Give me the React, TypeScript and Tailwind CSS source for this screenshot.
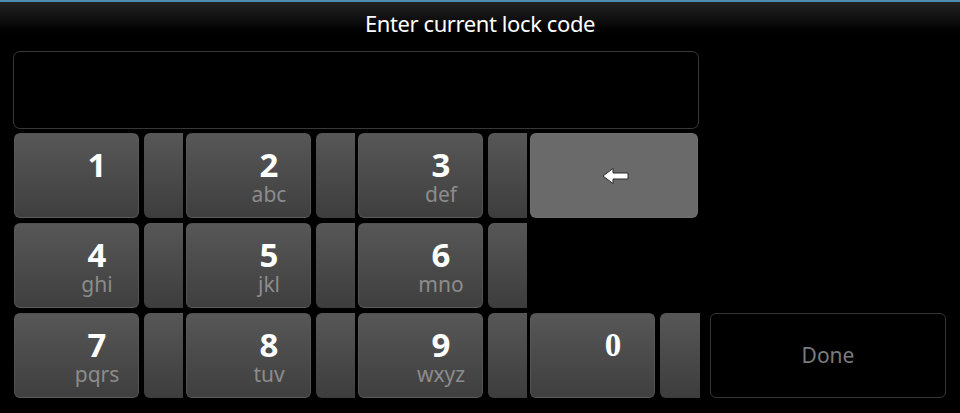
const keys = [
  [
    { d: "1", l: "" },
    { d: "2", l: "abc" },
    { d: "3", l: "def" },
  ],
  [
    { d: "4", l: "ghi" },
    { d: "5", l: "jkl" },
    { d: "6", l: "mno" },
  ],
  [
    { d: "7", l: "pqrs" },
    { d: "8", l: "tuv" },
    { d: "9", l: "wxyz" },
  ],
];

function Strip({ w = 39 }: { w?: number }) {
  return (
    <div
      className="h-[85px] rounded-l-[6px] bg-gradient-to-b from-[#575757] to-[#3d3d3d] shrink-0"
      style={{ width: w }}
    />
  );
}

function Key({ d, l, serif }: { d: string; l: string; serif?: boolean }) {
  return (
    <div className="w-[125px] h-[85px] rounded-[6px] bg-gradient-to-b from-[#575757] to-[#3f3f3f] border border-[#5e5e5e]/60 shrink-0 flex">
      <div className="ml-[52px] w-[60px] flex flex-col items-center pt-[16px]">
        <span
          className="text-white font-bold text-[33px] leading-[30px]"
          style={serif ? { fontFamily: '"Liberation Serif", serif' } : undefined}
        >
          {d}
        </span>
        {l && (
          <span className="text-[#8c8c8c] text-[21px] leading-[22px] mt-[3px]">
            {l}
          </span>
        )}
      </div>
    </div>
  );
}

export default function App() {
  return (
    <div
      className="w-[960px] h-[413px] bg-black overflow-hidden"
      style={{ fontFamily: '"Noto Sans", "Open Sans", sans-serif' }}
    >
      <div className="h-[2px] bg-[#4d8cb0]" />
      <div className="h-[40px] bg-gradient-to-b from-[#222222] via-[#0c0c0c] to-black flex justify-center">
        <p className="text-white text-[22px] leading-[40px] mt-[1px] tracking-[-0.4px]">
          Enter current lock code
        </p>
      </div>

      <div className="ml-[13px] mt-[9px] w-[686px] h-[78px] rounded-[7px] border border-[#383838]" />

      <div className="mt-[4px] ml-[14px] flex flex-col gap-[5px]">
        {keys.map((row, r) => (
          <div key={r} className="flex items-start">
            {row.map((k) => (
              <div key={k.d} className="flex">
                <Key d={k.d} l={k.l} />
                <div className="ml-[5px] mr-[3px]">
                  <Strip />
                </div>
              </div>
            ))}
            {r === 0 && (
              <div className="w-[168px] h-[85px] rounded-[6px] bg-[#6a6a6a] border border-[#747474]/60 flex items-center justify-center">
                <svg width="30" height="18" viewBox="0 0 30 18" className="ml-[3px]">
                  <polygon
                    points="2,9 12,1.5 12,6 27,6 27,12 12,12 12,16.5"
                    fill="#ffffff"
                    stroke="#2a2a2a"
                    strokeWidth="1"
                    strokeLinejoin="round"
                  />
                </svg>
              </div>
            )}
            {r === 2 && (
              <>
                <Key d="0" l="" serif />
                <div className="ml-[5px]">
                  <Strip w={40} />
                </div>
                <button className="ml-[10px] w-[236px] h-[85px] rounded-[6px] border border-[#343434] bg-black text-[#7a7a7a] text-[21px]">
                  Done
                </button>
              </>
            )}
          </div>
        ))}
      </div>
    </div>
  );
}
